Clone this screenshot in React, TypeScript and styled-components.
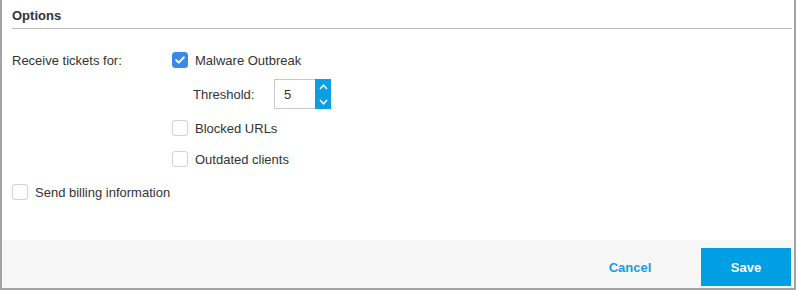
import React, { useState } from "react";
import styled, { createGlobalStyle } from "styled-components";

const GlobalStyle = createGlobalStyle`
    * { box-sizing: border-box; }
    body {
        margin: 0;
        font-family: "Liberation Sans", Arial, sans-serif;
        font-size: 13px;
        color: #333;
        background: #fff;
    }
`;

export default function App() {
    const [malware, setMalware] = useState(true);
    const [blocked, setBlocked] = useState(false);
    const [outdated, setOutdated] = useState(false);
    const [billing, setBilling] = useState(false);
    const [threshold, setThreshold] = useState(5);

    return (
        <>
            <GlobalStyle />
            <Panel>
                <Header>
                    <HeaderTitle>Options</HeaderTitle>
                </Header>
                <Body>
                    <FieldRow>
                        <FieldLabel>Receive tickets for:</FieldLabel>
                        <OptionList>
                            <CheckRow $mt={0} onClick={() => setMalware(!malware)}>
                                <Box $checked={malware}>
                                    {malware && (
                                        <svg width="10" height="8" viewBox="0 0 10 8">
                                            <path d="M1.2 4.2 L3.8 6.6 L8.8 1.4" fill="none" stroke="#fff" strokeWidth="2" strokeLinecap="round" strokeLinejoin="round" />
                                        </svg>
                                    )}
                                </Box>
                                <CheckText>Malware Outbreak</CheckText>
                            </CheckRow>
                            <ThresholdRow>
                                <ThresholdLabel>Threshold:</ThresholdLabel>
                                <NumberField>
                                    <NumberInput value={threshold} onChange={(e) => setThreshold(Number(e.target.value) || 0)} />
                                    <Spinner>
                                        <SpinButton onClick={() => setThreshold(threshold + 1)}>
                                            <svg width="9" height="6" viewBox="0 0 9 6">
                                                <path d="M1 5 L4.5 1.2 L8 5" fill="none" stroke="#fff" strokeWidth="1.5" />
                                            </svg>
                                        </SpinButton>
                                        <SpinButton onClick={() => setThreshold(Math.max(0, threshold - 1))}>
                                            <svg width="9" height="6" viewBox="0 0 9 6">
                                                <path d="M1 1 L4.5 4.8 L8 1" fill="none" stroke="#fff" strokeWidth="1.5" />
                                            </svg>
                                        </SpinButton>
                                    </Spinner>
                                </NumberField>
                            </ThresholdRow>
                            <CheckRow $mt={11} onClick={() => setBlocked(!blocked)}>
                                <Box $checked={blocked} />
                                <CheckText>Blocked URLs</CheckText>
                            </CheckRow>
                            <CheckRow $mt={15} onClick={() => setOutdated(!outdated)}>
                                <Box $checked={outdated} />
                                <CheckText>Outdated clients</CheckText>
                            </CheckRow>
                        </OptionList>
                    </FieldRow>
                    <CheckRow $mt={17} onClick={() => setBilling(!billing)}>
                        <Box $checked={billing} />
                        <CheckText>Send billing information</CheckText>
                    </CheckRow>
                </Body>
                <Footer>
                    <CancelButton>Cancel</CancelButton>
                    <SaveButton>Save</SaveButton>
                </Footer>
            </Panel>
        </>
    );
}

const Panel = styled.div`
    width: 796px;
    height: 290px;
    display: flex;
    flex-direction: column;
    border-left: 2px solid #a3a3a3;
    border-right: 2px solid #a3a3a3;
    border-bottom: 2px solid #a3a3a3;
`;

const Header = styled.div`
    height: 29px;
    margin: 0 2px 0 10px;
    border-bottom: 1px solid #bdbdbd;
    display: flex;
    align-items: center;
`;

const HeaderTitle = styled.h3`
    margin: 0;
    font-size: 13px;
    font-weight: 700;
    color: #333;
    line-height: 16px;
    padding-top: 4px;
`;

const Body = styled.div`
    flex: 1;
    padding: 23px 10px 0 10px;
`;

const FieldRow = styled.div`
    display: flex;
    align-items: flex-start;
`;

const FieldLabel = styled.div`
    width: 160px;
    line-height: 16px;
    padding-top: 1px;
`;

const OptionList = styled.div`
    display: flex;
    flex-direction: column;
`;

const CheckRow = styled.div<{ $mt: number }>`
    display: flex;
    align-items: center;
    gap: 7px;
    height: 16px;
    margin-top: ${({ $mt }) => $mt}px;
    cursor: pointer;
`;

const Box = styled.span<{ $checked: boolean }>`
    width: 16px;
    height: 16px;
    border-radius: 3px;
    display: inline-flex;
    align-items: center;
    justify-content: center;
    background: ${({ $checked }) => ($checked ? "#3b89e6" : "#fff")};
    border: 1px solid ${({ $checked }) => ($checked ? "#3b89e6" : "#d2d2d2")};
`;

const CheckText = styled.span`
    line-height: 16px;
    padding-top: 1px;
`;

const ThresholdRow = styled.div`
    display: flex;
    align-items: center;
    margin-top: 11px;
    padding-left: 21px;
`;

const ThresholdLabel = styled.span`
    width: 81px;
`;

const NumberField = styled.div`
    display: flex;
    height: 30px;
`;

const NumberInput = styled.input`
    width: 41px;
    height: 30px;
    border: 1px solid #c8c8c8;
    border-right: none;
    padding: 0 0 0 9px;
    font-family: "Liberation Sans", Arial, sans-serif;
    font-size: 13px;
    color: #333;
    outline: none;
`;

const Spinner = styled.div`
    width: 16px;
    height: 30px;
    background: #0a9fe2;
    display: flex;
    flex-direction: column;
`;

const SpinButton = styled.button`
    flex: 1;
    border: none;
    background: transparent;
    padding: 0;
    display: flex;
    align-items: center;
    justify-content: center;
    cursor: pointer;
`;

const Footer = styled.div`
    height: 48px;
    background: #f7f7f7;
    display: flex;
    justify-content: flex-end;
    align-items: flex-start;
    padding: 8px 3px 0 0;
    gap: 26px;
`;

const CancelButton = styled.button`
    width: 90px;
    height: 38px;
    border: none;
    background: transparent;
    color: #1a9ee2;
    font-family: "Liberation Sans", Arial, sans-serif;
    font-size: 13px;
    font-weight: 700;
    cursor: pointer;
`;

const SaveButton = styled.button`
    width: 90px;
    height: 38px;
    border: none;
    background: #009fe3;
    color: #fff;
    font-family: "Liberation Sans", Arial, sans-serif;
    font-size: 13px;
    font-weight: 700;
    cursor: pointer;
`;
